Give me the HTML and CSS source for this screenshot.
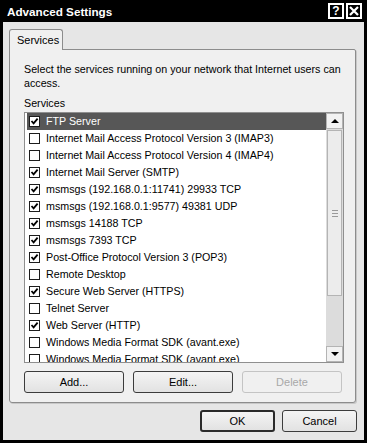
FILE: index.html
```html
<!DOCTYPE html>
<html lang="en">
<head>
  <meta charset="UTF-8" />
  <title>Advanced Settings</title>
  <link rel="stylesheet" href="styles.css">
</head>
<body>

  <div class="window">
    <!-- Title bar -->
    <div class="titlebar">
      <span class="title">Advanced Settings</span>
      <div class="title-buttons">
        <span class="tbtn">?</span>
        <span class="tbtn">
          <svg width="10" height="10" viewBox="0 0 10 10"><path d="M1 1 L9 9 M9 1 L1 9" stroke="#fff" stroke-width="2.2" /></svg>
        </span>
      </div>
    </div>

    <div class="content">
      <div class="tabs">
        <div class="tab">Services</div>
      </div>

      <div class="panel">
        <p class="intro">Select the services running on your network that Internet users can access.</p>
        <div class="label">Services</div>

        <div class="listbox">
          <ul class="items">
            <li class="selected"><span class="check on"></span>FTP Server</li>
            <li><span class="check"></span>Internet Mail Access Protocol Version 3 (IMAP3)</li>
            <li><span class="check"></span>Internet Mail Access Protocol Version 4 (IMAP4)</li>
            <li><span class="check on"></span>Internet Mail Server (SMTP)</li>
            <li><span class="check on"></span>msmsgs (192.168.0.1:11741) 29933 TCP</li>
            <li><span class="check on"></span>msmsgs (192.168.0.1:9577) 49381 UDP</li>
            <li><span class="check on"></span>msmsgs 14188 TCP</li>
            <li><span class="check on"></span>msmsgs 7393 TCP</li>
            <li><span class="check on"></span>Post-Office Protocol Version 3 (POP3)</li>
            <li><span class="check"></span>Remote Desktop</li>
            <li><span class="check on"></span>Secure Web Server (HTTPS)</li>
            <li><span class="check"></span>Telnet Server</li>
            <li><span class="check on"></span>Web Server (HTTP)</li>
            <li><span class="check"></span>Windows Media Format SDK (avant.exe)</li>
            <li><span class="check"></span>Windows Media Format SDK (avant.exe)</li>
          </ul>
          <div class="scrollbar">
            <div class="arrow up"></div>
            <div class="thumb"><span class="grip"></span></div>
            <div class="track"></div>
            <div class="arrow down"></div>
          </div>
        </div>

        <div class="actions">
          <button class="btn">Add...</button>
          <button class="btn">Edit...</button>
          <button class="btn" disabled>Delete</button>
        </div>
      </div>

      <div class="dialog-buttons">
        <button class="btn default">OK</button>
        <button class="btn">Cancel</button>
      </div>
    </div>
  </div>

</body>
</html>
```

FILE: styles.css
```css
body {
  margin: 0;
  padding: 0;
  font-family: 'Liberation Sans', Arial, sans-serif;
  font-size: 10.7px;
  color: #000;
  background: #000;
}

.window {
  width: 367px;
  height: 443px;
  box-sizing: border-box;
  border: 3px solid #000;
  border-top: 0;
  background: #e6e6e6;
  display: flex;
  flex-direction: column;
}

.titlebar {
  height: 22px;
  background: #000;
  display: flex;
  align-items: center;
  justify-content: space-between;
  margin: 0 -3px;
  padding-left: 7px;
  padding-right: 5px;
}

.title {
  color: #fff;
  font-weight: bold;
  font-size: 11.7px;
}

.title-buttons {
  display: flex;
  gap: 2px;
}

.tbtn {
  width: 16px;
  height: 16px;
  box-sizing: border-box;
  border: 2px solid #fff;
  color: #fff;
  font-weight: bold;
  font-size: 12px;
  line-height: 12px;
  display: flex;
  align-items: center;
  justify-content: center;
}

.content {
  flex: 1;
  display: flex;
  flex-direction: column;
  padding: 7px 8px 0 6px;
}

.tabs {
  display: flex;
  height: 20px;
}

.tab {
  width: 54px;
  box-sizing: border-box;
  border: 1px solid #8c8c8c;
  border-bottom: 0;
  border-radius: 3px 3px 0 0;
  background: #f0f0f0;
  padding: 4px 0 0 7px;
  position: relative;
  z-index: 1;
  height: 21px;
  font-size: 11px;
}

.panel {
  height: 354px;
  box-sizing: border-box;
  border: 1px solid #8c8c8c;
  border-radius: 0 2px 3px 3px;
  background: #f0f0f0;
  padding: 12px 11px 0 14px;
  box-shadow: 1px 1px 0 #c8c8c8;
}

.intro {
  margin: 0;
  line-height: 14px;
}

.label {
  margin-top: 6px;
  line-height: 14px;
}

.listbox {
  display: flex;
  height: 251px;
  box-sizing: border-box;
  border: 1px solid #8f8f8f;
  background: #fff;
  margin-top: 2px;
  overflow: hidden;
}

.items {
  list-style: none;
  margin: 0;
  padding: 0 0 0 2px;
  flex: 1;
}

.items li {
  height: 17px;
  line-height: 17px;
  display: flex;
  align-items: center;
  padding-left: 2px;
  white-space: nowrap;
}

.items li.selected {
  background: #575757;
  color: #fff;
}

.check {
  width: 11px;
  height: 11px;
  box-sizing: border-box;
  border: 1px solid #1c1c1c;
  background: #fff;
  margin-right: 6px;
  flex-shrink: 0;
}

.check.on {
  background: #fff url("data:image/svg+xml;utf8,<svg xmlns='http://www.w3.org/2000/svg' width='9' height='9' viewBox='0 0 9 9'><path d='M1.5 4 L3.6 6.3 L7.6 1.6' fill='none' stroke='black' stroke-width='1.8'/></svg>") no-repeat center;
}

.scrollbar {
  width: 17px;
  display: flex;
  flex-direction: column;
  background: #dcdcdc;
}

.arrow {
  height: 16px;
  box-sizing: border-box;
  border: 1px solid #b4b4b4;
  background: #f2f2f2;
  display: flex;
  align-items: center;
  justify-content: center;
}

.arrow::after {
  content: "";
  border-left: 4px solid transparent;
  border-right: 4px solid transparent;
}

.arrow.up::after {
  border-bottom: 4px solid #000;
}

.arrow.down::after {
  border-top: 4px solid #000;
}

.thumb {
  height: 166px;
  box-sizing: border-box;
  border: 1px solid #b4b4b4;
  background: #ececec;
  margin: 1px 1px 0;
  display: flex;
  align-items: center;
  justify-content: center;
}

.grip {
  width: 6px;
  height: 5px;
  border-top: 1px solid #999;
  border-bottom: 1px solid #999;
  position: relative;
}

.grip::after {
  content: "";
  position: absolute;
  left: 0;
  right: 0;
  top: 2px;
  border-top: 1px solid #999;
}

.track {
  flex: 1;
}

.actions {
  display: flex;
  gap: 9px;
  margin-top: 8px;
}

.btn {
  font-family: 'Liberation Sans', Arial, sans-serif;
  font-size: 11px;
  width: 100px;
  height: 22px;
  box-sizing: border-box;
  border: 1px solid #3c3c3c;
  border-radius: 3px;
  background: linear-gradient(#f4f4f4, #e2e2e2);
  color: #000;
  padding: 0;
}

.btn:disabled {
  border-color: #c4c4c4;
  color: #a8a8a8;
  background: #f0f0f0;
}

.dialog-buttons {
  display: flex;
  justify-content: flex-end;
  gap: 7px;
  margin-top: 7px;
  margin-right: -1px;
}

.dialog-buttons .btn {
  width: 75px;
}

.btn.default {
  border-width: 2px;
  border-color: #2a2a2a;
}
```
